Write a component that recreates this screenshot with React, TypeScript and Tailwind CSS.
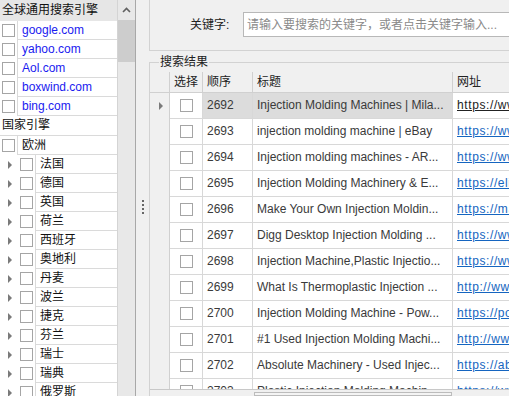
const ENGINES = ['google.com', 'yahoo.com', 'Aol.com', 'boxwind.com', 'bing.com']

const COUNTRIES = ['法国', '德国', '英国', '荷兰', '西班牙', '奥地利', '丹麦', '波兰', '捷克', '芬兰', '瑞士', '瑞典', '俄罗斯']

const RESULTS: [number, string, string][] = [
  [2692, 'Injection Molding Machines | Mila...', 'https://www.milacron.com'],
  [2693, 'injection molding machine | eBay', 'https://www.ebay.com'],
  [2694, 'Injection molding machines - AR...', 'https://www.arburg.com'],
  [2695, 'Injection Molding Machinery & E...', 'https://elitemachinery.com'],
  [2696, 'Make Your Own Injection Moldin...', 'https://makezine.com'],
  [2697, 'Digg Desktop Injection Molding ...', 'https://www.kickstarter.com'],
  [2698, 'Injection Machine,Plastic Injectio...', 'https://www.haitian.com'],
  [2699, 'What Is Thermoplastic Injection ...', 'http://www.rutland.com'],
  [2700, 'Injection Molding Machine - Pow...', 'https://powerjet.com'],
  [2701, '#1 Used Injection Molding Machi...', 'http://www.usedmachines.com'],
  [2702, 'Absolute Machinery - Used Injec...', 'https://absolutemachinery.com'],
  [2703, 'Plastic Injection Molding Machin...', 'https://www.plastic.com'],
]

function Check() {
  return <div className="w-[13px] h-[13px] border border-[#a5a5a5] bg-white shrink-0" />
}

function Arrow() {
  return <div className="w-0 h-0 border-y-[4px] border-y-transparent border-l-[4px] border-l-[#7a7a7a]" />
}

function Tree() {
  return (
    <div className="w-[118px] shrink-0 bg-white border-r border-[#d4d4d4] overflow-hidden">
      <div className="h-[21px] bg-[#e6e6e6] pl-[2px] leading-[21px] text-[#111]">全球通用搜索引擎</div>
      {ENGINES.map((e) => (
        <div key={e} className="flex h-[19px]">
          <div className="w-[17px] flex items-center pl-[2px]">
            <Check />
          </div>
          <div className="flex-1 border-l border-b border-[#dadada] pl-[4px] leading-[18px] text-[#1a1af0]">{e}</div>
        </div>
      ))}
      <div className="h-[20px] border-b border-[#dadada] pl-[2px] leading-[19px] text-[#111]">国家引擎</div>
      <div className="flex h-[19px]">
        <div className="w-[17px] flex items-center pl-[2px]">
          <Check />
        </div>
        <div className="flex-1 border-l border-b border-[#dadada] pl-[4px] leading-[18px] text-[#111]">欧洲</div>
      </div>
      {COUNTRIES.map((c) => (
        <div key={c} className="flex h-[19px]">
          <div className="w-[18px] flex items-center pl-[8px]">
            <Arrow />
          </div>
          <div className="w-[17px] flex items-center pl-[2px]">
            <Check />
          </div>
          <div className="flex-1 border-l border-b border-[#dadada] pl-[4px] leading-[18px] text-[#111]">{c}</div>
        </div>
      ))}
    </div>
  )
}

export default function App() {
  return (
    <div className="w-[509px] h-[396px] flex overflow-hidden bg-[#f0f0f0] text-[12px] font-['Liberation_Sans','Noto_Sans_CJK_SC',sans-serif]">
      {/* 左侧引擎树 */}
      <Tree />
      <div className="w-[17px] shrink-0 bg-[#e8e8e8] flex flex-col">
        <div className="h-[20px] flex items-center justify-center">
          <svg width="9" height="6" viewBox="0 0 9 6" fill="none">
            <path d="M1 5l3.5-3.5L8 5" stroke="#606060" strokeWidth="1.6" />
          </svg>
        </div>
        <div className="h-[42px] bg-[#cdcdcd]" />
      </div>
      <div className="w-[1px] shrink-0 bg-[#a8a8a8]" />
      {/* 分隔条 */}
      <div className="w-[13px] shrink-0 flex flex-col items-center justify-center gap-[2px] pt-[18px]">
        {[0, 1, 2, 3].map((i) => (
          <div key={i} className="w-[2px] h-[2px] bg-[#666]" />
        ))}
      </div>

      {/* 右侧 */}
      <div className="flex-1 flex flex-col min-w-0">
        <div className="h-[51px] shrink-0 border-l border-b border-[#d2d2d2] flex items-center pl-[40px] pb-[1px] overflow-hidden">
          <span className="w-[53px] shrink-0 text-[#222]">关键字:</span>
          <input
            className="w-[300px] shrink-0 h-[25px] bg-white border border-[#b8b8b8] pl-[3px] outline-none placeholder:text-[#8a8a8a]"
            placeholder="请输入要搜索的关键字，或者点击关键字输入..."
          />
        </div>
        <div className="h-[1px] shrink-0" />

        <div className="flex h-[20px] shrink-0">
          <div className="w-[10px] mt-[10px] border-t border-l border-[#d2d2d2]" />
          <span className="leading-[20px] px-[1px] text-[#222]">搜索结果</span>
          <div className="flex-1 mt-[10px] border-t border-[#d2d2d2]" />
        </div>

        <div className="flex-1 flex flex-col border-l border-[#d2d2d2] min-h-0">
          {/* 表头 */}
          <div className="flex h-[21px] shrink-0 border-b border-[#d0d0d0] text-[#222]">
            <div className="w-[20px] shrink-0 border-r border-[#d0d0d0]" />
            <div className="w-[33px] shrink-0 border-r border-[#d0d0d0] pl-[4px] leading-[20px]">选择</div>
            <div className="w-[50px] shrink-0 border-r border-[#d0d0d0] pl-[4px] leading-[20px]">顺序</div>
            <div className="w-[200px] shrink-0 border-r border-[#d0d0d0] pl-[4px] leading-[20px]">标题</div>
            <div className="flex-1 pl-[4px] leading-[20px]">网址</div>
          </div>
          {/* 数据行 */}
          <div className="h-[296px] shrink-0 overflow-hidden">
            {RESULTS.map(([n, title, url], i) => {
              const sel = i === 0
              return (
                <div key={n} className="flex h-[26px]">
                  <div className="w-[20px] shrink-0 border-r border-[#d0d0d0] flex items-center pl-[9px]">
                    {sel && <Arrow />}
                  </div>
                  <div className="w-[33px] shrink-0 border-r border-b border-[#d8d8d8] bg-white flex items-center justify-center">
                    <Check />
                  </div>
                  <div className={`w-[50px] shrink-0 border-r border-b border-[#d8d8d8] pl-[4px] leading-[25px] text-[#3a3a3a] ${sel ? 'bg-[#dcdcdc]' : 'bg-white'}`}>
                    {n}
                  </div>
                  <div className={`w-[200px] shrink-0 border-r border-b border-[#d8d8d8] pl-[4px] leading-[25px] text-[#3a3a3a] whitespace-nowrap overflow-hidden ${sel ? 'bg-[#dcdcdc]' : 'bg-white'}`}>
                    {title}
                  </div>
                  <div className="flex-1 min-w-0 border-b border-[#d8d8d8] bg-white pl-[4px] leading-[25px] whitespace-nowrap overflow-hidden">
                    <span className={`underline tracking-[0.6px] ${sel ? 'text-[#222]' : 'text-[#1565c0]'}`}>{url}</span>
                  </div>
                </div>
              )
            })}
          </div>
          {/* 水平滚动条 */}
          <div className="flex-1 border-t border-[#c8c8c8] flex pt-[2px]">
            <div className="ml-[104px] w-[198px] border border-[#bcbcbc] bg-[#f4f4f4]" />
          </div>
        </div>
      </div>
    </div>
  )
}
